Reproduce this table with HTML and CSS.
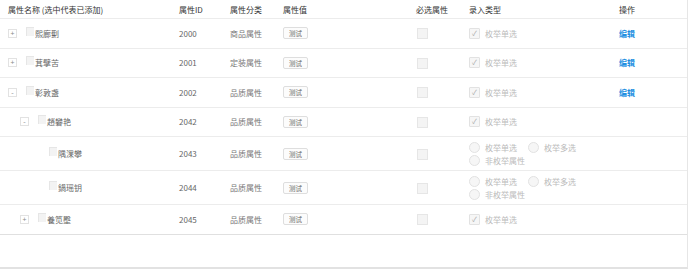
FILE: index.html
```html
<!DOCTYPE html>
<html lang="zh">
<head>
<meta charset="utf-8">
<link rel="stylesheet" href="styles.css">
</head>
<body>
<div class="panel">
<table class="grid">
  <colgroup>
    <col class="c-name"><col class="c-id"><col class="c-cat"><col class="c-val"><col class="c-req"><col class="c-type"><col class="c-op">
  </colgroup>
  <thead>
    <tr>
      <th>属性名称 (选中代表已添加)</th>
      <th>属性ID</th>
      <th>属性分类</th>
      <th>属性值</th>
      <th>必选属性</th>
      <th>录入类型</th>
      <th>操作</th>
    </tr>
  </thead>
  <tbody>
    <tr class="row">
      <td><div class="name lvl0"><span class="exp">+</span><span class="cb"></span><span class="txt">熙廊劐</span></div></td>
      <td>2000</td><td class="cat">商品属性</td>
      <td><span class="tag">测试</span></td>
      <td><span class="box"></span></td>
      <td><div class="opt"><span class="chk">✓</span><span class="lbl">枚举单选</span></div></td>
      <td><a class="edit">编辑</a></td>
    </tr>
    <tr class="row">
      <td><div class="name lvl0"><span class="exp">+</span><span class="cb"></span><span class="txt">萁擘苦</span></div></td>
      <td>2001</td><td class="cat">定装属性</td>
      <td><span class="tag">测试</span></td>
      <td><span class="box"></span></td>
      <td><div class="opt"><span class="chk">✓</span><span class="lbl">枚举单选</span></div></td>
      <td><a class="edit">编辑</a></td>
    </tr>
    <tr class="row">
      <td><div class="name lvl0"><span class="exp">-</span><span class="cb"></span><span class="txt">彰敦盏</span></div></td>
      <td>2002</td><td class="cat">品质属性</td>
      <td><span class="tag">测试</span></td>
      <td><span class="box"></span></td>
      <td><div class="opt"><span class="chk">✓</span><span class="lbl">枚举单选</span></div></td>
      <td><a class="edit">编辑</a></td>
    </tr>
    <tr class="row">
      <td><div class="name lvl1"><span class="exp">-</span><span class="cb"></span><span class="txt">趙礬艳</span></div></td>
      <td>2042</td><td class="cat">品质属性</td>
      <td><span class="tag">测试</span></td>
      <td><span class="box"></span></td>
      <td><div class="opt"><span class="chk">✓</span><span class="lbl">枚举单选</span></div></td>
      <td></td>
    </tr>
    <tr class="row tall">
      <td><div class="name lvl2"><span class="cb"></span><span class="txt">隅淉攀</span></div></td>
      <td>2043</td><td class="cat">品质属性</td>
      <td><span class="tag">测试</span></td>
      <td><span class="box"></span></td>
      <td>
        <div class="radios">
          <span class="ropt"><span class="radio"></span><span class="lbl">枚举单选</span></span>
          <span class="ropt"><span class="radio"></span><span class="lbl">枚举多选</span></span>
          <span class="ropt"><span class="radio"></span><span class="lbl">非枚举属性</span></span>
        </div>
      </td>
      <td></td>
    </tr>
    <tr class="row tall">
      <td><div class="name lvl2"><span class="cb"></span><span class="txt">鍋瑶钥</span></div></td>
      <td>2044</td><td class="cat">品质属性</td>
      <td><span class="tag">测试</span></td>
      <td><span class="box"></span></td>
      <td>
        <div class="radios">
          <span class="ropt"><span class="radio"></span><span class="lbl">枚举单选</span></span>
          <span class="ropt"><span class="radio"></span><span class="lbl">枚举多选</span></span>
          <span class="ropt"><span class="radio"></span><span class="lbl">非枚举属性</span></span>
        </div>
      </td>
      <td></td>
    </tr>
    <tr class="row">
      <td><div class="name lvl1"><span class="exp">+</span><span class="cb"></span><span class="txt">養笕壂</span></div></td>
      <td>2045</td><td class="cat">品质属性</td>
      <td><span class="tag">测试</span></td>
      <td><span class="box"></span></td>
      <td><div class="opt"><span class="chk">✓</span><span class="lbl">枚举单选</span></div></td>
      <td></td>
    </tr>
  </tbody>
</table>
</div>
</body>
</html>
```
FILE: styles.css
```css
html, body {
  margin: 0;
  padding: 0;
  background: #fff;
}
body {
  font-family: "Noto Sans CJK SC", "Noto Sans", sans-serif;
  font-size: 8px;
  color: #666;
}
.panel {
  width: 687px;
  height: 267px;
  border-right: 1px solid #e6e6e6;
  border-bottom: 2px solid #e2e2e2;
}
.grid {
  width: 687px;
  border-collapse: collapse;
  table-layout: fixed;
}
.c-name { width: 171px; }
.c-id { width: 51px; }
.c-cat { width: 53px; }
.c-val { width: 133px; }
.c-req { width: 53px; }
.c-type { width: 150px; }
.c-op { width: 76px; }
th {
  height: 18px;
  padding: 0 0 0 8px;
  text-align: left;
  font-weight: normal;
  color: #333;
  border-bottom: 1px solid #ececec;
  vertical-align: middle;
  white-space: nowrap;
}
td {
  padding: 0 0 0 8px;
  vertical-align: middle;
  border-bottom: 1px solid #ececec;
  white-space: nowrap;
}
.row td { height: 28.5px; }
.row.tall td { height: 33px; }
tbody tr:last-child td { border-bottom: 1px solid #e0e0e0; }
.cat { color: #777; }
.name {
  display: flex;
  align-items: center;
}
.lvl1 { padding-left: 12px; }
.lvl2 { padding-left: 41px; }
.exp {
  width: 7px;
  height: 7px;
  border: 1px solid #e2e2e2;
  font-size: 7px;
  line-height: 7px;
  text-align: center;
  color: #888;
  margin-right: 9px;
}
.cb {
  width: 7px;
  height: 8px;
  background: #f3f3f3;
  border-top: 1px solid #e6e6e6;
  border-left: 1px solid #e6e6e6;
  margin-right: 1px;
  margin-top: -4px;
}
.txt { color: #666; }
.tag {
  display: inline-block;
  padding: 0 5px;
  height: 10px;
  line-height: 10px;
  border: 1px solid #dedede;
  border-radius: 2px;
  background: #fcfcfc;
  color: #666;
  font-size: 6.5px;
}
.box {
  display: inline-block;
  width: 9px;
  height: 9px;
  margin-left: 1px;
  background: #f4f4f4;
  border: 1px solid #e6e6e6;
  vertical-align: middle;
}
.opt {
  display: flex;
  align-items: center;
}
.chk {
  width: 9px;
  height: 9px;
  border: 1px solid #e2e2e2;
  background: #f6f6f6;
  border-radius: 1px;
  font-size: 7px;
  line-height: 9px;
  text-align: center;
  color: #aaa;
  margin-right: 5px;
}
.lbl { color: #bbb; }
.radios {
  display: flex;
  flex-wrap: wrap;
  width: 140px;
  row-gap: 2px;
}
.ropt {
  display: flex;
  align-items: center;
  margin-right: 11px;
  height: 11px;
}
.radio {
  width: 9px;
  height: 9px;
  border: 1px solid #e2e2e2;
  border-radius: 50%;
  background: #f6f6f6;
  margin-right: 5px;
}
.edit {
  color: #1e8fe1;
  font-weight: bold;
  cursor: pointer;
}
```
